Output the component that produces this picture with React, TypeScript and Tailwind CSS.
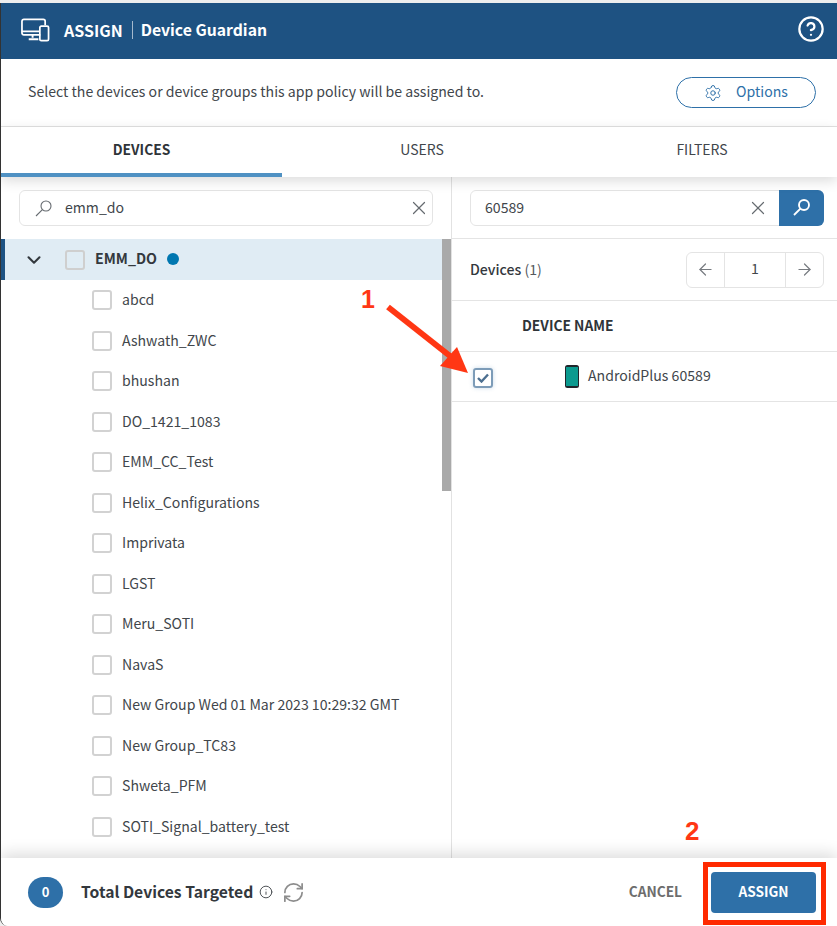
import { ArrowLeft, ArrowRight, ChevronDown, CircleHelp, Info, RefreshCw, Settings, X } from "lucide-react";

const groups = [
  "abcd",
  "Ashwath_ZWC",
  "bhushan",
  "DO_1421_1083",
  "EMM_CC_Test",
  "Helix_Configurations",
  "Imprivata",
  "LGST",
  "Meru_SOTI",
  "NavaS",
  "New Group Wed 01 Mar 2023 10:29:32 GMT",
  "New Group_TC83",
  "Shweta_PFM",
  "SOTI_Signal_battery_test",
];

function DevicesIcon() {
  return (
    <svg width="29" height="24" viewBox="0 0 30 24" fill="none" stroke="white" strokeWidth="1.8">
      <path d="M20 17H3a2 2 0 0 1-2-2V3a2 2 0 0 1 2-2h20a2 2 0 0 1 2 2v4" />
      <path d="M1 13.5h18" />
      <path d="M12 17v3M8 21.5h10" strokeWidth="2" />
      <rect x="19.5" y="8" width="9" height="15" rx="1.5" />
    </svg>
  );
}

function PhoneIcon() {
  return (
    <svg width="14" height="23" viewBox="0 0 14 23">
      <rect x="0" y="0" width="14" height="23" rx="2.5" fill="#20262b" />
      <rect x="1" y="2" width="12" height="19" fill="#0b9a8f" />
    </svg>
  );
}

// magnifier with the small lens up right and a long handle, as in the product
function SearchGlyph({ color, weight }: { color: string; weight: number }) {
  return (
    <svg width="17" height="17" viewBox="0 0 17 17" fill="none" stroke={color} strokeWidth={weight}>
      <circle cx="11" cy="6" r="5" />
      <path d="M7.4 9.6 L1 16" />
    </svg>
  );
}

function Annotation() {
  return (
    <svg className="absolute left-[380px] top-[298px] z-20" width="110" height="90" viewBox="0 0 110 90">
      <path d="M8 9 L70 58" stroke="#ff3714" strokeWidth="6" />
      <path d="M88 75 L60 68 L77 49 Z" fill="#ff3714" />
    </svg>
  );
}

export default function App() {
  return (
    <div className="relative flex h-[926px] w-[837px] flex-col overflow-hidden bg-[#eeeeee] pt-[3px] font-['Noto_Sans_CJK_JP','Noto_Sans',sans-serif] text-[#33383d]">
      <div className="flex h-[923px] flex-col overflow-hidden rounded-bl-lg border-l border-l-[#333333] bg-white">
        <header className="flex h-14 shrink-0 items-center justify-between bg-[#1e5282] pb-[3px] pl-5 pr-[12px] text-white">
          <div className="flex items-center">
            <DevicesIcon />
            <span className="ml-[14px] text-[16px] font-semibold leading-6">ASSIGN</span>
            <span className="ml-[9px] mr-[8px] h-[18px] w-px bg-white/60" />
            <span className="text-[15.75px] font-semibold leading-6">Device Guardian</span>
          </div>
          <CircleHelp size={28} strokeWidth={1.9} className="mb-[2px]" />
        </header>

        <div className="flex h-[68px] shrink-0 items-center justify-between border-b border-[#e2e2e2] pl-[27px] pr-[21px]">
          <p className="pb-[3px] text-[14.1px] leading-6 text-[#41464b]">Select the devices or device groups this app policy will be assigned to.</p>
          <button className="flex h-[31px] w-[140px] items-center justify-center gap-[14px] rounded-full border border-[#2e70a8] pb-[2px] text-[14.1px] text-[#2e70a8]">
            <Settings size={18} strokeWidth={1.3} className="mt-[2px]" />
            Options
          </button>
        </div>

        <div className="relative z-10 flex h-[50px] shrink-0 bg-white text-[14px] shadow-[0_4px_12px_rgba(0,0,0,0.14)]">
          <div className="flex w-[281px] shrink-0 items-center justify-center border-b-4 border-[#4f91c3] pb-[2px] text-[13.8px] font-semibold text-[#2f3439]">DEVICES</div>
          <div className="flex w-[280px] shrink-0 items-center justify-center pb-[6px] text-[#41464b]">USERS</div>
          <div className="flex w-[280px] shrink-0 items-center justify-center pb-[6px] text-[#41464b]">FILTERS</div>
        </div>

        <div className="flex min-h-0 flex-1">
          <section className="flex w-[451px] shrink-0 flex-col border-r border-[#e2e2e2]">
            <div className="px-[18px] pt-[13px] pb-[13px]">
              <div className="flex h-9 items-center rounded-md border border-[#e4e4e4] pl-[15px] pr-[2px]">
                <SearchGlyph color="#666b70" weight={1.1} />
                <span className="ml-[13px] flex-1 text-[14.1px] text-[#41464b]">emm_do</span>
                <X size={22} strokeWidth={1.3} className="text-[#666b70]" />
              </div>
            </div>
            <div className="relative min-h-0 flex-1 overflow-hidden pr-[9px]">
              <div className="absolute right-0 top-0 h-[252px] w-[9px] bg-[#a9a9a9]" />
              <div className="flex h-[41px] items-center border-l-[4px] border-[#1e5282] bg-[#e0ecf4] pl-[18px]">
                <ChevronDown size={22} strokeWidth={2.3} className="text-[#33383d]" />
                <span className="ml-[20px] h-5 w-5 rounded-[3px] border-2 border-[#cfcfcf]" />
                <span className="ml-[10px] pb-[4px] text-[14.2px] font-bold leading-5">EMM_DO</span>
                <span className="ml-[10px] mb-[2px] h-[12px] w-[12px] rounded-full bg-[#0077b0]" />
              </div>
              {groups.map((name) => (
                <div key={name} className="flex h-[40.5px] items-center pl-[91px]">
                  <span className="h-5 w-5 shrink-0 rounded-[3px] border-2 border-[#d2d2d2]" />
                  <span className="ml-[10px] whitespace-nowrap pb-[2px] text-[14.1px] leading-5 text-[#41464b]">{name}</span>
                </div>
              ))}
            </div>
          </section>

          <section className="flex min-w-0 flex-1 flex-col">
            <div className="flex h-[62px] items-center border-b border-[#e4e4e4] pl-[18px] pr-[13px]">
              <div className="flex h-[36px] flex-1 items-center rounded-md border border-[#e4e4e4] pl-[14px]">
                <span className="flex-1 text-[14.1px] text-[#41464b]">60589</span>
                <X size={22} strokeWidth={1.3} className="mr-[10px] text-[#666b70]" />
                <span className="-mr-px -my-px flex h-[36px] w-[45px] items-center justify-center rounded-r-md bg-[#2e70a8]">
                  <SearchGlyph color="white" weight={1.9} />
                </span>
              </div>
            </div>
            <div className="flex h-[62px] items-center justify-between border-b border-[#e4e4e4] pl-[18px] pr-[13px]">
              <p className="pb-[2px] text-[14.1px] leading-5"><span className="font-medium">Devices</span> <span className="text-[#55595e]">(1)</span></p>
              <div className="flex h-[36px] w-[138px] items-center rounded-md border border-[#e4e4e4] text-[#777b80]">
                <span className="flex h-full w-[37px] items-center justify-center"><ArrowLeft size={19} strokeWidth={1.5} /></span>
                <span className="flex h-full flex-1 items-center justify-center border-x border-[#e4e4e4] pb-[1px] text-[14.1px] text-[#41464b]">1</span>
                <span className="flex h-full w-[37px] items-center justify-center"><ArrowRight size={19} strokeWidth={1.5} /></span>
              </div>
            </div>
            <div className="flex h-[51px] items-center border-b border-[#e4e4e4] pb-[2px] pl-[70px] text-[13.8px] font-semibold leading-5 text-[#2f3439]">DEVICE NAME</div>
            <div className="flex h-[50px] items-center border-b border-[#e4e4e4] pl-[21px]">
              <span className="mt-[3px] flex h-5 w-5 items-center justify-center rounded-[3px] border-2 border-[#7d9cb8] shadow-[0_0_4px_rgba(46,112,168,0.25)]">
                <svg width="12" height="10" viewBox="0 0 12 10" fill="none" stroke="#4c6f90" strokeWidth="2.4"><path d="M1 5l3.5 3.5L11 1.5" /></svg>
              </span>
              <span className="ml-[72px] flex"><PhoneIcon /></span>
              <span className="ml-[9px] pb-[3px] text-[14.1px] leading-5 text-[#41464b]">AndroidPlus 60589</span>
            </div>
          </section>
        </div>

        <footer className="relative z-10 flex h-[68px] shrink-0 items-center bg-white pl-[27px] pr-[21px] shadow-[0_-5px_14px_rgba(0,0,0,0.13)]">
          <span className="flex h-[31px] w-[35px] items-center justify-center rounded-full bg-[#2e70a8] text-[13px] font-semibold text-white">0</span>
          <span className="ml-[18px] text-[15.7px] font-semibold leading-6 text-[#33383d]">Total Devices Targeted</span>
          <Info size={14} strokeWidth={1.6} className="ml-[6px] text-[#44484c]" />
          <RefreshCw size={23} strokeWidth={1.8} className="ml-[9px] text-[#8d8d8d]" />
          <span className="ml-auto pb-[2px] text-[13.7px] font-semibold text-[#6d6d6d]">CANCEL</span>
          <button className="ml-[29px] h-[41px] w-[105px] rounded bg-[#2e70a8] pb-[2px] text-[13.7px] font-semibold text-white">ASSIGN</button>
        </footer>
      </div>

      <Annotation />
      <span className="absolute left-[361px] top-[285px] z-20 font-['Liberation_Sans',sans-serif] text-[25px] font-bold leading-7 text-[#ff3714]">1</span>
      <span className="absolute left-[685px] top-[817px] z-20 font-['Liberation_Sans',sans-serif] text-[26px] font-bold leading-7 text-[#ff3714]">2</span>
      <div className="absolute left-[703px] top-[862px] z-20 h-[63px] w-[123px] border-[5px] border-[#ff2a00]" />
    </div>
  );
}
